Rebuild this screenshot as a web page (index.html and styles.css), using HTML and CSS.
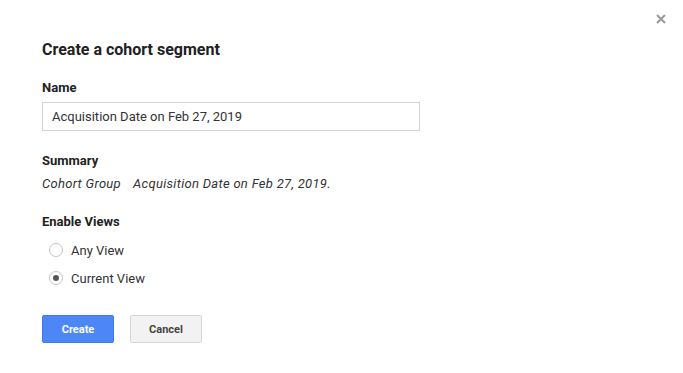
FILE: index.html
```html
<!DOCTYPE html>
<html lang="en">

<head>
    <meta charset="UTF-8">
    <meta name="viewport" content="width=device-width, initial-scale=1.0">
    <title>Create a cohort segment</title>
    <link rel="stylesheet" href="styles.css">
</head>

<body>
    <div id="dialog">
        <a href="javascript:;" class="close">
            <svg width="10" height="10" viewBox="0 0 10 10">
                <path d="M1 1 L9 9 M9 1 L1 9" stroke="#999" stroke-width="2" />
            </svg>
        </a>
        <h1 class="title">Create a cohort segment</h1>

        <div class="label name-label">Name</div>
        <input class="name-input" type="text" value="Acquisition Date on Feb 27, 2019">

        <div class="label summary-label">Summary</div>
        <div class="summary"><span class="group">Cohort Group</span>Acquisition Date on Feb 27, 2019.</div>

        <div class="label views-label">Enable Views</div>
        <ul class="views">
            <li><span class="radio"></span>Any View</li>
            <li><span class="radio checked"></span>Current View</li>
        </ul>

        <div class="buttons">
            <a href="javascript:;" class="btn btn-create">Create</a>
            <a href="javascript:;" class="btn btn-cancel">Cancel</a>
        </div>
    </div>
</body>

</html>
```

FILE: styles.css
```css
* {
    margin: 0;
    padding: 0;
    box-sizing: border-box;
}

body {
    background-color: #fff;
    font-family: Roboto, "Liberation Sans", sans-serif;
    color: #222;
}

#dialog {
    position: relative;
    width: 683px;
    height: 373px;
    padding: 41px 42px 0;
}

.close {
    position: absolute;
    top: 14px;
    left: 656px;
    display: block;
    width: 10px;
    height: 10px;
}

.close svg {
    display: block;
}

.title {
    font-size: 16px;
    font-weight: bold;
    line-height: 18px;
    color: #212121;
}

.label {
    font-size: 13px;
    font-weight: bold;
    line-height: 15px;
    color: #222;
    margin-top: 22px;
}

.name-label {
    margin-top: 21px;
}

.name-input {
    display: block;
    width: 378px;
    height: 29px;
    margin-top: 7px;
    padding: 0 9px;
    border: 1px solid #d4d4d4;
    font-family: Roboto, "Liberation Sans", sans-serif;
    font-size: 13px;
    color: #333;
    outline: none;
}

.summary-label {
    margin-top: 22px;
}

.summary {
    margin-top: 8px;
    font-size: 13px;
    font-style: italic;
    line-height: 15px;
    letter-spacing: 0.3px;
    color: #333;
}

.summary .group {
    margin-right: 12px;
}

.views-label {
    margin-top: 23px;
}

.views {
    list-style: none;
    margin-top: 7px;
}

.views li {
    display: flex;
    align-items: center;
    height: 28px;
    padding-left: 7px;
    font-size: 13px;
    color: #333;
}

.radio {
    display: block;
    width: 14px;
    height: 14px;
    margin-right: 8px;
    border: 1px solid #c4c4c4;
    border-radius: 50%;
    position: relative;
}

.radio.checked::after {
    content: "";
    position: absolute;
    top: 3px;
    left: 3px;
    width: 6px;
    height: 6px;
    border-radius: 50%;
    background-color: #555;
}

.buttons {
    display: flex;
    gap: 16px;
    margin-top: 23px;
}

.btn {
    display: flex;
    align-items: center;
    justify-content: center;
    width: 72px;
    height: 28px;
    border-radius: 2px;
    font-size: 11px;
    font-weight: bold;
    text-decoration: none;
}

.btn-create {
    background-color: #4d87f7;
    border: 1px solid #3f79e9;
    color: #fff;
}

.btn-cancel {
    background-color: #f2f2f2;
    border: 1px solid #d6d6d6;
    color: #444;
}
```
